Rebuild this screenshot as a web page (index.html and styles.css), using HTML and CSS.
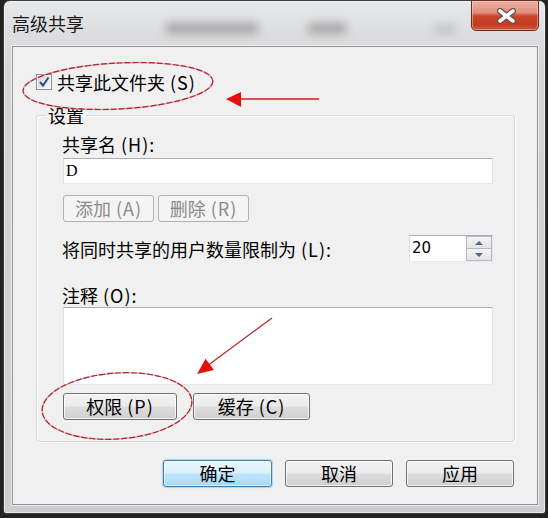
FILE: index.html
```html
<!DOCTYPE html>
<html lang="zh-CN">
<head>
<meta charset="utf-8">
<title>高级共享</title>
<link rel="stylesheet" href="styles.css">
</head>
<body>
<div class="window">
  <div class="titlebar">
    <span class="title">高级共享</span>
    <div class="blur b1"></div>
    <div class="blur b2"></div>
    <div class="blur b3"></div>
    <button class="close" aria-label="关闭">
      <svg width="19" height="16" viewBox="0 0 19 16">
        <path d="M3 3 L16 13 M16 3 L3 13" stroke="#6a4a44" stroke-width="6" stroke-linecap="round"/>
        <path d="M3 3 L16 13 M16 3 L3 13" stroke="#ffffff" stroke-width="3.6" stroke-linecap="round"/>
      </svg>
    </button>
  </div>
  <div class="client">
    <label class="check-row">
      <span class="checkbox">
        <svg width="14" height="14" viewBox="0 0 14 14"><path d="M3 7 L6 10.5 L11.5 2.5" fill="none" stroke="#34488a" stroke-width="2"/></svg>
      </span>
      <span>共享此文件夹<span class="key"> (S)</span></span>
    </label>
    <fieldset class="group">
      <legend>设置</legend>
      <div class="group-body">
        <div class="label l-name">共享名<span class="key"> (H):</span></div>
        <div class="textbox name">D</div>
        <div class="btn-row1">
          <button class="btn disabled w91">添加<span class="key"> (A)</span></button>
          <button class="btn disabled w91">删除<span class="key"> (R)</span></button>
        </div>
        <div class="limit-row">
          <span class="label">将同时共享的用户数量限制为<span class="key"> (L):</span></span>
          <div class="spin">
            <span class="spin-val">20</span>
            <div class="spin-btns">
              <span class="spin-btn"><i class="tri-up"></i></span>
              <span class="spin-btn"><i class="tri-down"></i></span>
            </div>
          </div>
        </div>
        <div class="label l-comment">注释<span class="key"> (O):</span></div>
        <div class="textarea"></div>
        <div class="btn-row2">
          <button class="btn w114">权限<span class="key"> (P)</span></button>
          <button class="btn w117">缓存<span class="key"> (C)</span></button>
        </div>
      </div>
    </fieldset>
    <div class="dialog-buttons">
      <button class="btn default w109">确定</button>
      <button class="btn w108">取消</button>
      <button class="btn w108">应用</button>
    </div>
  </div>
</div>
<svg class="annotations" width="548" height="518" viewBox="0 0 548 518">
  <ellipse cx="118" cy="86" rx="95" ry="23" transform="rotate(-3 118 86)" fill="none" stroke="#eaa2a8" stroke-width="1.4"/>
  <ellipse cx="118" cy="86" rx="95" ry="23" transform="rotate(-3 118 86)" fill="none" stroke="#a82a36" stroke-width="1.2" stroke-dasharray="6 2"/>
  <line x1="319" y1="99" x2="236" y2="99" stroke="#d41c1c" stroke-width="1.6"/>
  <polygon points="226,99 241,92 241,107" fill="#e41010"/>
  <ellipse cx="117" cy="406" rx="75" ry="33" transform="rotate(-4 117 406)" fill="none" stroke="#eaa2a8" stroke-width="1.4"/>
  <ellipse cx="117" cy="406" rx="75" ry="33" transform="rotate(-4 117 406)" fill="none" stroke="#a82a36" stroke-width="1.2" stroke-dasharray="6 2"/>
  <line x1="272" y1="318" x2="207" y2="366" stroke="#b52a2a" stroke-width="1.3"/>
  <polygon points="197,374 214,370 205.6,358.8" fill="#e41010"/>
</svg>
</body>
</html>
```

FILE: styles.css
```css
* {
  box-sizing: border-box;
}

html,
body {
  margin: 0;
}

body {
  width: 548px;
  height: 518px;
  overflow: hidden;
  position: relative;
  background: #222222;
  font-family: "Noto Sans CJK SC", "Noto Sans", sans-serif;
  font-size: 18px;
  color: #000;
}

.key {
  letter-spacing: 1px;
}

.window {
  margin-left: 3px;
  width: 543px;
  height: 514px;
  border: 1px solid #3c3c3c;
  border-radius: 7px 7px 3px 3px;
  background: linear-gradient(180deg, #e7e8e9 0, #dddedf 30px, #d3d4d6 70px, #cdcecf 100%);
  box-shadow: inset 0 0 0 1px rgba(255, 255, 255, 0.55);
  display: flex;
  flex-direction: column;
}

.titlebar {
  height: 45px;
  position: relative;
  display: flex;
  align-items: flex-start;
  flex: none;
}

.title {
  margin: 11px 0 0 8px;
  font-size: 18px;
  line-height: 22px;
  color: #1a1a1a;
  position: relative;
  z-index: 1;
}

.blur {
  position: absolute;
  background: #8e8e8e;
  filter: blur(5px);
  opacity: 0.7;
}

.b1 {
  left: 162px;
  top: 22px;
  width: 92px;
  height: 11px;
}

.b2 {
  left: 304px;
  top: 22px;
  width: 38px;
  height: 11px;
}

.b3 {
  left: 430px;
  top: 24px;
  width: 22px;
  height: 8px;
  opacity: 0.4;
}

.close {
  margin: -1px 6px 0 auto;
  width: 68px;
  height: 31px;
  padding: 0;
  border: 1px solid #6a2b22;
  border-radius: 0 0 5px 5px;
  background: linear-gradient(180deg, #eab1a4 0, #e08f7c 40%, #c9452b 52%, #c43a21 80%, #d0583c 100%);
  box-shadow: inset 0 0 0 1px rgba(255, 220, 210, 0.45);
  display: flex;
  align-items: center;
  justify-content: center;
  position: relative;
  z-index: 1;
}

.close svg {
  margin: 1px 0 0 3px;
}

.client {
  margin: 0 7px 0 8px;
  width: 526px;
  height: 459px;
  flex: none;
  border: 1px solid #939393;
  background: #f0f0f0;
  box-shadow: 0 0 0 1px rgba(255, 255, 255, 0.6);
  display: flex;
  flex-direction: column;
  align-items: flex-start;
}

.check-row {
  margin: 25px 0 0 23px;
  height: 20px;
  display: flex;
  align-items: center;
  gap: 5px;
  line-height: 20px;
}

.checkbox {
  width: 16px;
  height: 16px;
  border: 1px solid #8e8f8f;
  background: linear-gradient(135deg, #cbd3de 0, #e8ecf1 60%, #f6f7f9 100%);
  box-shadow: inset 0 0 0 1px #f4f6f8;
  display: flex;
  align-items: center;
  justify-content: center;
}

.group {
  margin: 13px 0 0 23px;
  width: 479px;
  min-width: 0;
  padding: 0;
  border: 1px solid #d2d7db;
  border-radius: 3px;
  box-shadow: inset 1px 1px 0 #ffffff, 1px 1px 0 #ffffff;
}

.group legend {
  margin-left: 9px;
  padding: 0 2px;
  line-height: 20px;
  font-size: 18px;
}

.group-body {
  padding: 0 0 21px 26px;
  display: flex;
  flex-direction: column;
  align-items: flex-start;
}

.label {
  line-height: 20px;
  margin-left: -1px;
  white-space: nowrap;
}

.l-name {
  margin-top: 9px;
}

.textbox,
.textarea {
  background: #fff;
  border: 1px solid;
  border-color: #abadb3 #e2e3ea #e3e9ef #dbdfe6;
  width: 430px;
}

.name {
  margin-top: 4px;
  height: 26px;
  padding-left: 2px;
  font-family: "Liberation Serif", serif;
  font-size: 16px;
  line-height: 24px;
}

.btn-row1 {
  margin-top: 11px;
  display: flex;
  gap: 4px;
}

.btn-row2 {
  margin-top: 8px;
  display: flex;
  gap: 16px;
}

.btn {
  height: 27px;
  padding: 0;
  font-family: inherit;
  font-size: 18px;
  line-height: 25px;
  color: #000;
  border: 1px solid #707070;
  border-radius: 3px;
  background: linear-gradient(180deg, #f2f2f2 0, #ebebeb 48%, #dddddd 52%, #cfcfcf 100%);
  box-shadow: inset 0 0 0 1px rgba(255, 255, 255, 0.75);
}

.btn.disabled {
  border-color: #adb2b5;
  background: #f4f4f4;
  color: #8a8a8a;
  box-shadow: none;
}

.btn.default {
  border-color: #3c7fb1;
  background: linear-gradient(180deg, #eaf6fd 0, #d9f0fc 48%, #bee6fd 52%, #a7d9f5 100%);
  box-shadow: inset 0 0 0 1px rgba(255, 255, 255, 0.6), 0 0 1px 1px rgba(90, 180, 230, 0.45);
}

.w91 { width: 91px; }
.w108 { width: 108px; }
.w109 { width: 109px; }
.w114 { width: 114px; }
.w117 { width: 117px; }

.limit-row {
  margin-top: 13px;
  width: 430px;
  height: 27px;
  display: flex;
  align-items: center;
  justify-content: space-between;
}

.spin {
  width: 84px;
  height: 27px;
  display: flex;
  background: #fff;
  border: 1px solid;
  border-color: #abadb3 #e2e3ea #e3e9ef #dbdfe6;
}

.spin-val {
  flex: 1;
  padding-left: 2px;
  font-family: "DejaVu Sans", "Liberation Sans", sans-serif;
  font-size: 15px;
  line-height: 25px;
}

.spin-btns {
  width: 26px;
  display: flex;
  flex-direction: column;
}

.spin-btn {
  flex: 1;
  display: flex;
  align-items: center;
  justify-content: center;
  border: 1px solid #b6b9bd;
  background: linear-gradient(180deg, #f3f3f3 0, #e4e4e4 100%);
}

.spin-btn + .spin-btn {
  border-top: 0;
}

.tri-up,
.tri-down {
  width: 0;
  height: 0;
  border-left: 4px solid transparent;
  border-right: 4px solid transparent;
}

.tri-up {
  border-bottom: 4px solid #56678f;
}

.tri-down {
  border-top: 4px solid #56678f;
}

.l-comment {
  margin-top: 23px;
}

.textarea {
  margin-top: 2px;
  height: 78px;
}

.dialog-buttons {
  margin-top: 18px;
  align-self: stretch;
  padding-right: 23px;
  display: flex;
  justify-content: flex-end;
  gap: 13px;
}

.annotations {
  position: absolute;
  top: 0;
  left: 0;
  pointer-events: none;
}
```
